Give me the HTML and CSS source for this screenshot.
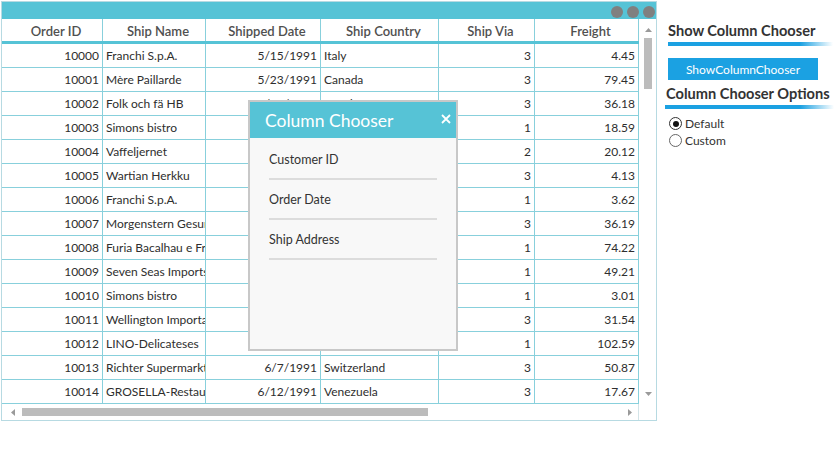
FILE: index.html
```html
<!DOCTYPE html>
<html>
<head>
<meta charset="utf-8">
<title>Column Chooser</title>
<link rel="stylesheet" href="styles.css">
</head>
<body>
<div class="page">
  <div class="grid">
    <div class="titlebar"><span class="dot"></span><span class="dot"></span><span class="dot"></span></div>
    <div class="gbody">
      <div class="table">
        <div class="hrow">
          <div class="hcell"><span class="hlabel">Order ID</span></div>
          <div class="hcell"><span class="hlabel">Ship Name</span></div>
          <div class="hcell"><span class="hlabel">Shipped Date</span></div>
          <div class="hcell"><span class="hlabel">Ship Country</span></div>
          <div class="hcell"><span class="hlabel">Ship Via</span></div>
          <div class="hcell"><span class="hlabel">Freight</span></div>
        </div>
        <div class="row"><div class="cell num">10000</div><div class="cell">Franchi S.p.A.</div><div class="cell num">5/15/1991</div><div class="cell">Italy</div><div class="cell num">3</div><div class="cell num">4.45</div></div>
        <div class="row"><div class="cell num">10001</div><div class="cell">Mère Paillarde</div><div class="cell num">5/23/1991</div><div class="cell">Canada</div><div class="cell num">3</div><div class="cell num">79.45</div></div>
        <div class="row"><div class="cell num">10002</div><div class="cell">Folk och fä HB</div><div class="cell num">5/17/1991</div><div class="cell">Sweden</div><div class="cell num">3</div><div class="cell num">36.18</div></div>
        <div class="row"><div class="cell num">10003</div><div class="cell">Simons bistro</div><div class="cell num">5/24/1991</div><div class="cell">Denmark</div><div class="cell num">1</div><div class="cell num">18.59</div></div>
        <div class="row"><div class="cell num">10004</div><div class="cell">Vaffeljernet</div><div class="cell num">5/22/1991</div><div class="cell">Denmark</div><div class="cell num">2</div><div class="cell num">20.12</div></div>
        <div class="row"><div class="cell num">10005</div><div class="cell">Wartian Herkku</div><div class="cell num">5/29/1991</div><div class="cell">Finland</div><div class="cell num">3</div><div class="cell num">4.13</div></div>
        <div class="row"><div class="cell num">10006</div><div class="cell">Franchi S.p.A.</div><div class="cell num">5/31/1991</div><div class="cell">Italy</div><div class="cell num">1</div><div class="cell num">3.62</div></div>
        <div class="row"><div class="cell num">10007</div><div class="cell">Morgenstern Gesundkost</div><div class="cell num">6/3/1991</div><div class="cell">Germany</div><div class="cell num">3</div><div class="cell num">36.19</div></div>
        <div class="row"><div class="cell num">10008</div><div class="cell">Furia Bacalhau e Frutos do Mar</div><div class="cell num">6/4/1991</div><div class="cell">Portugal</div><div class="cell num">1</div><div class="cell num">74.22</div></div>
        <div class="row"><div class="cell num">10009</div><div class="cell">Seven Seas Imports</div><div class="cell num">6/5/1991</div><div class="cell">UK</div><div class="cell num">1</div><div class="cell num">49.21</div></div>
        <div class="row"><div class="cell num">10010</div><div class="cell">Simons bistro</div><div class="cell num">6/5/1991</div><div class="cell">Denmark</div><div class="cell num">1</div><div class="cell num">3.01</div></div>
        <div class="row"><div class="cell num">10011</div><div class="cell">Wellington Importadora</div><div class="cell num">6/6/1991</div><div class="cell">Brazil</div><div class="cell num">3</div><div class="cell num">31.54</div></div>
        <div class="row"><div class="cell num">10012</div><div class="cell">LINO-Delicateses</div><div class="cell num">6/6/1991</div><div class="cell">Venezuela</div><div class="cell num">1</div><div class="cell num">102.59</div></div>
        <div class="row"><div class="cell num">10013</div><div class="cell">Richter Supermarkt</div><div class="cell num">6/7/1991</div><div class="cell">Switzerland</div><div class="cell num">3</div><div class="cell num">50.87</div></div>
        <div class="row"><div class="cell num">10014</div><div class="cell">GROSELLA-Restaurante</div><div class="cell num">6/12/1991</div><div class="cell">Venezuela</div><div class="cell num">3</div><div class="cell num">17.67</div></div>
      </div>
      <div class="vscroll">
        <svg class="arrow" width="7" height="4" viewBox="0 0 7 4"><polygon points="0,4 3.5,0 7,4" /></svg>
        <div class="vthumb"></div>
        <svg class="arrow down" width="7" height="4" viewBox="0 0 7 4"><polygon points="0,0 7,0 3.5,4" /></svg>
      </div>
    </div>
    <div class="hbar">
      <div class="hscroll">
        <svg class="arrow" width="4" height="7" viewBox="0 0 4 7"><polygon points="4,0 4,7 0,3.5" /></svg>
        <div class="hthumb"></div>
        <svg class="arrow right" width="4" height="7" viewBox="0 0 4 7"><polygon points="0,0 4,3.5 0,7" /></svg>
      </div>
      <div class="corner"></div>
    </div>

    <div class="chooser">
      <div class="chead">Column Chooser</div>
      <svg class="close" width="10" height="10" viewBox="0 0 10 10"><path d="M1 1 L9 9 M9 1 L1 9" /></svg>
      <div class="clist">
        <div class="citem">Customer ID</div>
        <div class="citem">Order Date</div>
        <div class="citem">Ship Address</div>
      </div>
    </div>
  </div>

  <div class="panel">
    <div class="ptitle t1">Show Column Chooser</div>
    <div class="pbar b1"></div>
    <button class="pbtn">ShowColumnChooser</button>
    <div class="ptitle t2">Column Chooser Options</div>
    <div class="pbar b2"></div>
    <label class="radio-row first"><span class="radio checked"></span>Default</label>
    <label class="radio-row"><span class="radio"></span>Custom</label>
  </div>
</div>
</body>
</html>
```
FILE: styles.css
```css
* { box-sizing: border-box; }
body {
  margin: 0;
  background: #fff;
  font-family: Lato, "Noto Sans", sans-serif;
  color: #333;
}
.page {
  display: flex;
  align-items: flex-start;
  padding: 1px 0 0 1px;
}
.grid {
  position: relative;
  width: 656px;
  border: 1px solid #b7dae2;
  background: #fff;
}
.titlebar {
  height: 17px;
  background: #56c3d6;
  display: flex;
  justify-content: flex-end;
  gap: 4px;
  padding: 4px 1px 0 0;
}
.dot {
  width: 12px;
  height: 12px;
  border-radius: 50%;
  background: #808080;
}
.gbody { display: flex; }
.table { width: 637px; }
.hrow, .row {
  display: grid;
  grid-template-columns: 101px 103px 115px 118px 96px 104px;
}
.hrow {
  height: 25px;
  border-bottom: 3px solid #56c3d6;
}
.hcell {
  border-right: 1px solid #88d0dc;
  padding: 5px 0 0 8px;
  text-align: center;
  font-size: 13px;
  font-weight: 600;
  color: #505050;
}
.hlabel {
  display: block;
  height: 13.5px;
  line-height: 15.5px;
  overflow: hidden;
  white-space: nowrap;
}
.row {
  height: 24px;
  border-bottom: 1px solid #88d0dc;
}
.cell {
  height: 23px;
  border-right: 1px solid #88d0dc;
  padding: 0 3px;
  font-size: 12px;
  line-height: 24px;
  white-space: nowrap;
  overflow: hidden;
  color: #2e2e2e;
}
.num { text-align: right; }

.vscroll {
  width: 17px;
  height: 385px;
  display: flex;
  flex-direction: column;
  align-items: center;
  padding: 9px 0 8px 1px;
}
.arrow { display: block; fill: #9a9a9a; flex: none; }
.vthumb {
  width: 8px;
  height: 51px;
  margin-top: 6px;
  background: #bcbcbc;
}
.arrow.down { margin-top: auto; }

.hbar {
  display: flex;
  height: 16px;
}
.hscroll {
  width: 637px;
  border-right: 1px solid #d3e4e8;
  display: flex;
  align-items: center;
  padding: 0 6px 0 9px;
}
.hthumb {
  width: 406px;
  height: 8px;
  margin-left: 7px;
  background: #bcbcbc;
}
.arrow.right { margin-left: auto; }
.corner { flex: 1; }

.chooser {
  position: absolute;
  left: 246px;
  top: 98px;
  width: 210px;
  height: 251px;
  border: 2px solid #c8c8c8;
  background: #f8f8f8;
}
.chead {
  height: 36px;
  background: #56c3d6;
  color: #fff;
  font-size: 17.5px;
  line-height: 36px;
  padding: 1px 0 0 15px;
  white-space: nowrap;
  overflow: hidden;
}
.close {
  position: absolute;
  right: 5px;
  top: 12px;
  stroke: #fff;
  stroke-width: 1.8;
  fill: none;
}
.clist {
  padding: 2px 0 0 19px;
}
.citem {
  width: 168px;
  height: 40px;
  border-bottom: 2px solid #dcdcdc;
  padding-top: 12px;
  font-size: 12.5px;
  line-height: 16px;
  color: #333;
}

.panel {
  margin-left: 8px;
  width: 170px;
  padding-top: 21px;
}
.ptitle {
  font-size: 14.6px;
  font-weight: 700;
  line-height: 18px;
  color: #333;
  white-space: nowrap;
}
.t1 { margin-left: 3px; }
.t2 { margin-left: 1px; margin-top: 5px; }
.pbar {
  height: 4px;
  margin-top: 2px;
  background: linear-gradient(to right, #1ba1e2 0%, #1ba1e2 80%, rgba(27, 161, 226, 0) 100%);
}
.b1 { margin-left: 3px; width: 165px; }
.b2 { width: 169px; }
.pbtn {
  display: block;
  margin: 12px 0 0 3px;
  width: 150px;
  height: 22px;
  border: none;
  padding: 0;
  background: #1ba1e2;
  color: #fff;
  font-family: Lato, "Noto Sans", sans-serif;
  font-size: 12px;
}
.radio-row {
  display: flex;
  align-items: center;
  gap: 3px;
  height: 17px;
  padding-left: 4px;
  font-size: 12px;
  color: #333;
}
.radio-row.first { margin-top: 6px; }
.radio {
  position: relative;
  width: 13px;
  height: 13px;
  border: 1px solid #666;
  border-radius: 50%;
  background: #fff;
}
.radio.checked { border-color: #333; }
.radio.checked::after {
  content: "";
  position: absolute;
  left: 2.5px;
  top: 2.5px;
  width: 6px;
  height: 6px;
  border-radius: 50%;
  background: #111;
}
```
